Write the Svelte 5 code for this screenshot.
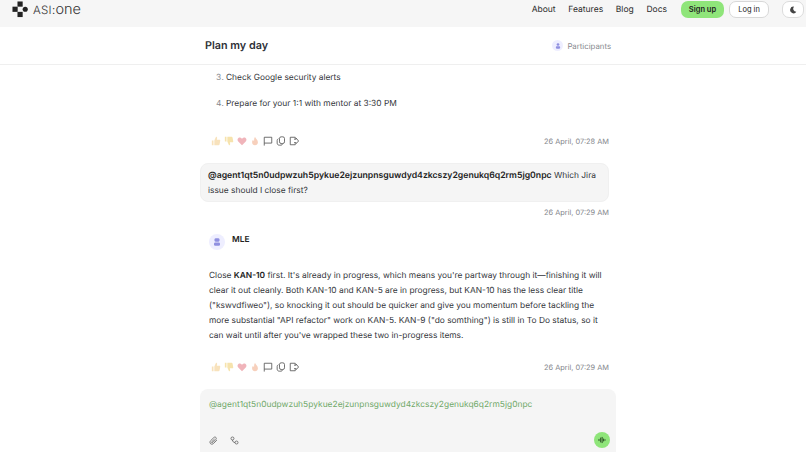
<script lang="ts">
  const navLinks = ['About', 'Features', 'Blog', 'Docs'];
  const agent = '@agent1qt5n0udpwzuh5pykue2ejzunpnsguwdyd4zkcszy2genukq6q2rm5jg0npc';
</script>

{#snippet actions(time: string)}
  <div class="actions">
    <div class="icons">
      <svg viewBox="0 0 12 12" class="ico"><path fill="#f8e2bc" d="M1 5.500h2V11H1zM4 5.500 6 1c1 0 1.600.8 1.400 1.800L7 4.500h3.200c.7 0 1 .6.9 1.200l-.9 4.400c-.1.6-.5.9-1 .9H4z" /></svg>
      <svg viewBox="0 0 12 12" class="ico"><path fill="#f6e3ad" d="M1 1h2v5.500H1zM4 6.500 6 11c1 0 1.600-.8 1.400-1.800L7 7.500h3.200c.7 0 1-.6.9-1.200l-.9-4.400c-.1-.6-.5-.9-1-.9H4z" /></svg>
      <svg viewBox="0 0 12 12" class="ico"><path fill="#f0b4ba" d="M6 11 1.500 6.500C.2 5.200.4 3.200 1.700 2.300c1.300-.9 3-.5 4.300 1.100 1.300-1.600 3-2 4.300-1.100 1.300.9 1.500 2.900.2 4.200z" /></svg>
      <svg viewBox="0 0 12 12" class="ico"><path fill="#f7d0bc" d="M6 1c.4 2 3.500 3.500 3.500 6.500C9.500 9.700 8 11 6 11S2.500 9.700 2.500 7.500c0-1.300.6-2.200 1.300-2.900.2 1 .6 1.500 1.100 1.700C4.800 4.300 5 2.500 6 1z" /></svg>
      <svg viewBox="0 0 12 12" class="ico line"><path d="M1.500 11.500V1.500h9v7h-9" /></svg>
      <svg viewBox="0 0 12 12" class="ico line"><rect x="4.200" y="1" width="6" height="8" rx="2" /><path d="M3 3.200C1.800 3.700 1.400 4.500 1.400 5.500v3c0 1.500 1 2.500 2.500 2.500h2c1 0 1.700-.5 2-1.200" /></svg>
      <svg viewBox="0 0 12 12" class="ico line"><path d="M7.500 3V1.500h-6v9h6V9M6 3.800h2.500V2.500L11.500 6 8.500 9.200V8H6" /></svg>
    </div>
    <span class="time">{time}</span>
  </div>
{/snippet}

<div class="page">
  <header class="topbar">
    <div class="brand">
      <svg class="logo" viewBox="0 0 18 18">
        <rect x="5.800" y="0.500" width="5.500" height="5.500" fill="#222" />
        <rect x="0.500" y="6" width="5.500" height="5.500" fill="#222" />
        <rect x="5.800" y="11.500" width="5.500" height="5.500" fill="#222" />
        <circle cx="14" cy="8.700" r="2.700" fill="#222" />
      </svg>
      <span class="wordmark"><span class="caps">ASI:</span>one</span>
    </div>
    <nav class="nav">
      {#each navLinks as link}
        <span class="nav-link">{link}</span>
      {/each}
      <button class="btn signup">Sign up</button>
      <button class="btn login">Log in</button>
      <button class="btn theme" aria-label="Toggle theme">
        <svg viewBox="0 0 12 12" width="8" height="8"><path fill="#444" d="M7.500 1A5 5 0 1 0 11 8.500 4.500 4.500 0 0 1 7.500 1z" /></svg>
      </button>
    </nav>
  </header>

  <div class="subbar">
    <div class="subbar-inner">
      <h1>Plan my day</h1>
      <div class="participants">
        <span class="avatar small">
          <svg viewBox="0 0 12 12"><circle cx="6" cy="3.800" r="2" fill="#8f8fe0" /><rect x="2.800" y="6.500" width="6.400" height="3.500" rx="1.200" fill="#8f8fe0" /></svg>
        </span>
        Participants
      </div>
    </div>
  </div>

  <main class="chat">
    <ol class="list" start="3">
      <li>Check Google security alerts</li>
      <li>Prepare for your 1:1 with mentor at 3:30 PM</li>
    </ol>

    {@render actions('26 April, 07:28 AM')}

    <div class="bubble">
      <strong>{agent}</strong> Which Jira issue should I close first?
    </div>
    <div class="bubble-time">26 April, 07:29 AM</div>

    <div class="sender">
      <span class="avatar">
        <svg viewBox="0 0 12 12"><rect x="3.500" y="2.200" width="5" height="3.600" rx="1.400" fill="#8f8fe0" /><rect x="3" y="6.500" width="6" height="3.300" rx="1.200" fill="#8f8fe0" /></svg>
      </span>
      <span class="sender-name">MLE</span>
    </div>

    <p class="reply">
      Close <strong>KAN-10</strong> first. It's already in progress, which means you're partway through it—finishing it will clear it out cleanly. Both KAN-10 and KAN-5 are in progress, but KAN-10 has the less clear title ("kswvdfiweo"), so knocking it out should be quicker and give you momentum before tackling the more substantial "API refactor" work on KAN-5. KAN-9 ("do somthing") is still in To Do status, so it can wait until after you've wrapped these two in-progress items.
    </p>

    {@render actions('26 April, 07:29 AM')}

    <div class="composer">
      <div class="draft">{agent}</div>
      <div class="composer-bar">
        <div class="tools">
          <svg viewBox="0 0 12 12" class="tool"><path d="M10.500 5.500 6 10c-1.200 1.200-3 1.200-4 .2s-1-2.800.2-4L6.500 2c.8-.8 2-.8 2.700-.1s.7 1.900-.1 2.700L5 8.700c-.4.4-1 .4-1.300.1s-.3-.9.100-1.300L7.500 4" /></svg>
          <svg viewBox="0 0 12 12" class="tool"><circle cx="3.300" cy="3.300" r="2" /><circle cx="8.700" cy="8.700" r="2" /><path d="M3.300 5.300c0 2 1.400 3.400 3.400 3.400" /></svg>
        </div>
        <button class="voice" aria-label="Voice input">
          <svg viewBox="0 0 12 12" width="8" height="8"><path stroke="#1d3a1a" stroke-width="1.300" stroke-linecap="round" d="M1.500 5v2M4 3v6M6.200 2v8M8.400 4.500v3M10.500 5.500v1" /></svg>
        </button>
      </div>
    </div>
  </main>
</div>

<style>
  :global(body) {
    margin: 0;
    background: #fff;
  }

  .page {
    width: 806px;
    height: 452px;
    overflow: hidden;
    font-family: Inter, 'Noto Sans', sans-serif;
    color: #33353a;
    text-rendering: geometricPrecision;
  }

  .topbar {
    height: 27px;
    background: #f6f6f6;
    display: flex;
    align-items: center;
    justify-content: space-between;
    padding: 0 2px 8px 12px;
    box-sizing: border-box;
  }

  .brand {
    display: flex;
    align-items: center;
    gap: 4px;
  }

  .logo {
    width: 17px;
    height: 17px;
  }

  .wordmark {
    font-size: 14.500px;
    font-weight: 300;
    color: #333;
  }

  .caps {
    font-size: 11.500px;
    letter-spacing: 0.300px;
  }

  .nav {
    display: flex;
    align-items: center;
    font-size: 8.500px;
  }

  .nav-link {
    margin-right: 12.700px;
    color: #2b2b2b;
  }

  .btn {
    font: inherit;
    font-size: 7.500px;
    height: 17px;
    border-radius: 7px;
    padding: 0;
    color: #222;
  }

  .signup {
    width: 43px;
    background: #8fe57a;
    border: none;
    font-weight: 600;
    margin-left: 1.300px;
    margin-right: 5px;
  }

  .login {
    width: 40px;
    background: #fff;
    border: 1px solid #d8d8d8;
    margin-right: 13px;
  }

  .theme {
    width: 22px;
    background: #fff;
    border: 1px solid #dcdcdc;
    display: flex;
    align-items: center;
    justify-content: center;
  }

  .subbar {
    height: 38px;
    border-bottom: 1px solid #efefef;
    box-sizing: border-box;
    display: flex;
    justify-content: center;
  }

  .subbar-inner {
    width: 406px;
    margin-left: 10px;
    display: flex;
    align-items: center;
    justify-content: space-between;
  }

  h1 {
    margin: 0;
    font-size: 10.800px;
    font-weight: 600;
    color: #2e3036;
  }

  .participants {
    display: flex;
    align-items: center;
    gap: 4px;
    font-size: 7.800px;
    color: #85878c;
  }

  .avatar {
    width: 16px;
    height: 16px;
    border-radius: 50%;
    background: #eeeeff;
    display: flex;
    align-items: center;
    justify-content: center;
  }

  .avatar svg {
    width: 12px;
    height: 12px;
  }

  .avatar.small {
    width: 11px;
    height: 11px;
  }

  .avatar.small svg {
    width: 8px;
    height: 8px;
  }

  .chat {
    width: 416px;
    margin-left: 200px;
    font-size: 8.400px;
    line-height: 15px;
  }

  .list {
    margin: 0;
    padding: 6px 0 0 26px;
  }

  .list li {
    margin-bottom: 11px;
  }

  .list li::marker {
    color: #85878c;
  }

  .actions {
    width: 409px;
    display: flex;
    align-items: center;
    justify-content: space-between;
    box-sizing: border-box;
    padding-left: 11px;
    height: 14px;
    margin-top: 22px;
  }

  .icons {
    display: flex;
    gap: 3px;
  }

  .ico {
    width: 10px;
    height: 10px;
  }

  .ico.line {
    fill: none;
    stroke: #555;
    stroke-width: 1;
  }

  .time {
    font-size: 7.400px;
    color: #85878c;
  }

  .bubble {
    width: 409px;
    box-sizing: border-box;
    margin-top: 15px;
    padding: 5px 7px 2px;
    height: 39px;
    background: #f5f5f5;
    border-radius: 8px;
    border: 1px solid #f0f0f0;
  }

  .bubble strong {
    font-size: 8.700px;
    font-weight: 600;
    color: #222;
  }

  .bubble-time {
    width: 409px;
    text-align: right;
    font-size: 7.400px;
    color: #85878c;
    margin-top: 3px;
  }

  .sender {
    display: flex;
    align-items: center;
    gap: 7px;
    margin: 14px 0 0 9px;
  }

  .sender-name {
    font-weight: 600;
    color: #222;
    margin-top: -4px;
  }

  .reply {
    width: 395px;
    margin: 19px 0 0 9px;
    line-height: 15px;
  }

  .reply strong {
    font-weight: 600;
    color: #222;
  }

  .reply + .actions {
    margin-top: 16px;
  }

  .composer {
    margin-top: 15px;
    height: 80px;
    background: #f5f5f5;
    border-radius: 8px;
    padding: 9px 6px 0 9px;
    box-sizing: border-box;
  }

  .draft {
    color: #6fa868;
    letter-spacing: 0.030px;
  }

  .composer-bar {
    margin-top: 19px;
    display: flex;
    align-items: center;
    justify-content: space-between;
  }

  .tools {
    display: flex;
    gap: 12px;
  }

  .tool {
    width: 9px;
    height: 9px;
    fill: none;
    stroke: #555;
    stroke-width: 1;
  }

  .voice {
    width: 16px;
    height: 16px;
    border-radius: 50%;
    border: none;
    background: #8fe57a;
    padding: 0;
    display: flex;
    align-items: center;
    justify-content: center;
  }
</style>
